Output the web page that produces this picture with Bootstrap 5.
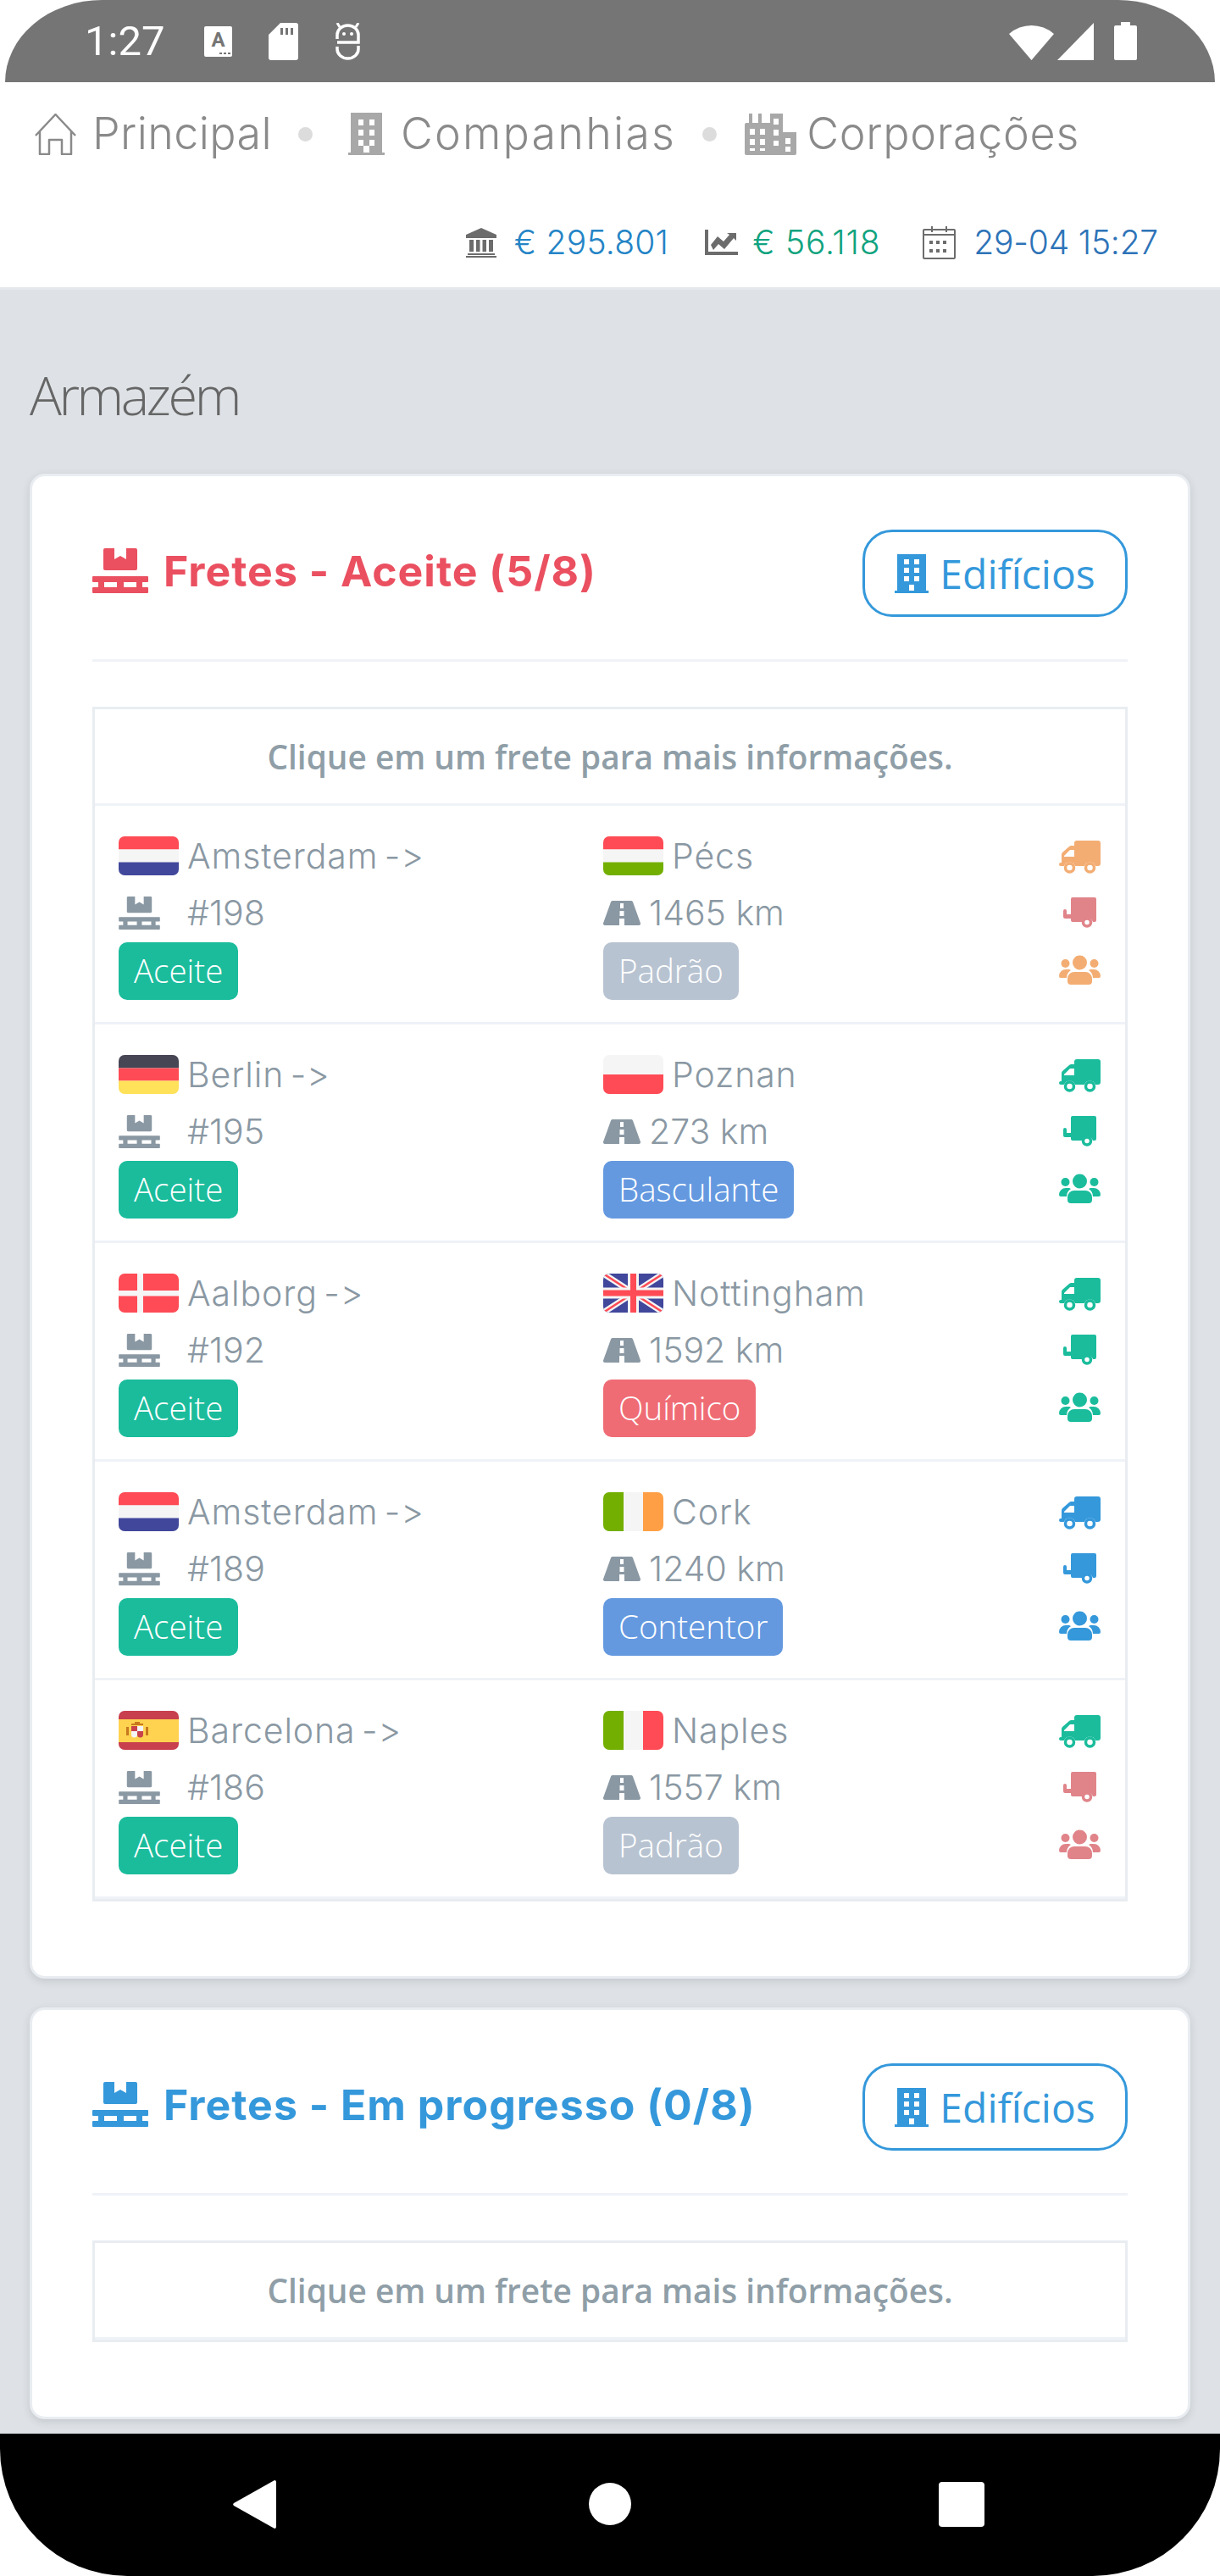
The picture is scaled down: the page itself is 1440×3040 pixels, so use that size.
<!DOCTYPE html>
<html lang="pt">
<head>
  <meta charset="UTF-8">
  <meta name="viewport" content="width=device-width, initial-scale=1.0">
  <title>Armazém</title>
  <link href="https://cdn.jsdelivr.net/npm/bootstrap@5.3.3/dist/css/bootstrap.min.css" rel="stylesheet">
  <style>
    body { background: #fff; height: 3040px; font-family: Inter, "Liberation Sans", sans-serif; font-variant-ligatures: none; font-feature-settings: "calt" 0; }
    svg { display: block; flex: none; }

    /* barras do android */
    .sys-top { height: 97px; margin: 0 6px; padding: 0 92px 0 94px; background: #757575; border-radius: 130px 130px 0 0 / 110px 110px 0 0; color: #fff; }
    .sys-time { font: 400 49px Roboto, sans-serif; width: 141px; }
    .sys-gap { margin-right: 43px; }
    .sys-bottom { height: 168px; padding: 0 278px 2px 275px; background: #000; border-radius: 0 0 150px 150px / 0 0 150px 150px; }
    .sys-circle { width: 50px; height: 50px; margin-left: 6px; }
    .sys-square { width: 54px; height: 53px; }

    /* topo */
    .top-bar { height: 247px; border-bottom: 3px solid #e5e8ec; background: #fff; }
    .top-links { padding-left: 41px; height: 122px; font-size: 52px; font-weight: 350; color: #8a8a8a; letter-spacing: .7px; }
    .top-ico-gap { margin-left: 19px; }
    .top-tight { letter-spacing: .4px; }
    .top-wide { letter-spacing: 2.2px; }
    .top-corp { margin-left: 12px; }
    .top-dot { width: 17px; height: 17px; margin: 0 42px 0 31px; border-radius: 50%; background: #dcdcdc; }
    .top-dot-end { margin-right: 33px; }
    .top-stats { margin-top: 32px; padding-right: 73px; font-size: 39px; font-weight: 350; letter-spacing: -.2px; height: 70px; }
    .stat-txt { margin-left: 21px; }
    .stat-ic { margin-left: 43px; }
    .stat-ic-end { margin-left: 50px; }
    .c-bank { color: #2484c6; letter-spacing: .25px; }
    .c-profit { color: #10a37f; letter-spacing: .8px; margin-left: 17px; }
    .c-date { color: #2d73b8; }

    /* conteudo */
    .page-main { background: #dee2e6; padding: 0 35px; overflow: hidden; }
    .page-title { font: 300 63px/76px "Open Sans", sans-serif; letter-spacing: -3.4px; color: #666; margin: 0; padding: 86px 0 0; height: 217px; }
    .frete-card { border: 3px solid #e9edf1; border-radius: 18px; box-shadow: 0 3px 10px rgba(60, 70, 80, .16); margin-bottom: 34px; }
    .frete-card .card-body { padding: 63px 71px 88px; }
    .frete-head { gap: 18px; margin: 0 0 6px; font-size: 50px; font-weight: 700; letter-spacing: 1px; }
    .frete-red { color: #ea5060; }
    .frete-blue { color: #3498db; }
    .btn-edif { gap: 13px; height: 103px; width: 313px; padding: 0; border: 3.5px solid #3498db; border-radius: 35px; color: #3498db; font: 400 48px "Open Sans", sans-serif; background: #fff; }
    .frete-sep { border: 0; border-top: 3px solid #eff2f7; opacity: 1; margin: 50px 0 53px; }
    .frete-list { border: 3px solid #e9edf1; border-radius: 0; }
    .frete-list .list-group-item { border: 0; border-bottom: 3px solid #eff2f7; border-radius: 0; padding: 0; }
    .frete-hint { height: 114px; display: flex; align-items: center; justify-content: center; font: 600 38.8px "Open Sans", sans-serif; color: #8f9ea7; }
    .frete-row { padding: 36px 29px 26px 28px !important; color: #8a98a3; font-size: 41px; font-weight: 350; }
    .col-from { width: 572px; }
    .row-line1 { gap: 10px; height: 46px; letter-spacing: .9px; word-spacing: -5px; }
    .row-line2 { height: 60px; margin-top: 14px; letter-spacing: 0; }
    .row-status { margin-top: 5px; }
    .road-gap { gap: 10px; }
    .col-icons { width: 49px; padding-top: 5px; }
    .ic-mid { margin-top: 28px; }
    .ic-last { margin-top: 32px; }
    .flag { width: 71px; height: 46px; border-radius: 7px; }
    .frete-tag { display: inline-block; height: 68px; padding: 0 18px; border-radius: 10px; color: #fff; font: 300 38.5px/66px "Open Sans", sans-serif; }
    .tag-ok { background: #1abc9c; }
    .tag-std { background: #b8c3d1; }
    .tag-blue { background: #6499e0; }
    .tag-red { background: #ef6c75; }
    .st-green { color: #1abc9c; }
    .st-orange { color: #f3ad73; }
    .st-red { color: #e0848a; }
    .st-blue { color: #3498db; }
  </style>
</head>
<body class="d-flex flex-column m-0">

<!-- icones -->
<svg width="0" height="0" class="position-absolute">
  <symbol id="i-pallet" viewBox="0 0 66 53"><path fill="currentColor" d="M13 2a2 2 0 0 1 2-2h11v13l7-4 7 4V0h11a2 2 0 0 1 2 2v22a2 2 0 0 1-2 2H15a2 2 0 0 1-2-2z"/><path fill="currentColor" d="M1 33h64a1 1 0 0 1 1 1v5a1 1 0 0 1-1 1h-6v6h6a1 1 0 0 1 1 1v5a1 1 0 0 1-1 1H1a1 1 0 0 1-1-1v-5a1 1 0 0 1 1-1h6v-6H1a1 1 0 0 1-1-1v-5a1 1 0 0 1 1-1zm13 7v6h15v-6zm23 0v6h15v-6z" fill-rule="evenodd"/></symbol>
  <symbol id="i-road" viewBox="0 0 44 29"><path fill="currentColor" d="M11 0h22a2 2 0 0 1 2 1.500l9 25a2 2 0 0 1-2 2.500H2a2 2 0 0 1-2-2.500l9-25A2 2 0 0 1 11 0z"/><path fill="#fff" d="M20 3h4v6h-4zM19.500 12h5v6h-5zM19 21h6v8h-6z"/></symbol>
  <symbol id="i-truck" viewBox="0 0 49 39"><path fill="currentColor" d="M18 3a3 3 0 0 1 3-3h25a3 3 0 0 1 3 3v24a3 3 0 0 1-3 3h-3a7 7 0 0 0-13 0H19a7 7 0 0 0-13 0H2a2 2 0 0 1 0-4h1V17a4 4 0 0 1 1-3l8-7a4 4 0 0 1 3-1h3z"/><path fill="#fff" d="M18 11v8H6v-1l7-7z"/><circle cx="12.500" cy="32" r="5" fill="none" stroke="currentColor" stroke-width="3.500"/><circle cx="36.500" cy="32" r="5" fill="none" stroke="currentColor" stroke-width="3.500"/></symbol>
  <symbol id="i-trailer" viewBox="0 0 39 36"><path fill="currentColor" d="M9 2a2 2 0 0 1 2-2h26a2 2 0 0 1 2 2v25a2 2 0 0 1-2 2h-2a7 7 0 0 0-13 0H11a2 2 0 0 1-2-2v-2H2a2 2 0 0 1-2-2v-7a2 2 0 0 1 4 0v4h5z"/><circle cx="28" cy="29.500" r="4.500" fill="none" stroke="currentColor" stroke-width="3.500"/></symbol>
  <symbol id="i-users" viewBox="0 0 49 35"><circle cx="24.500" cy="9" r="8.500" fill="currentColor"/><circle cx="7.500" cy="10" r="5" fill="currentColor"/><circle cx="41.500" cy="10" r="5" fill="currentColor"/><path fill="currentColor" d="M10 31v-3a8 8 0 0 1 8-8h13a8 8 0 0 1 8 8v3a4 4 0 0 1-4 4H14a4 4 0 0 1-4-4zM0 25a8 8 0 0 1 8-8h4l2 1a11 11 0 0 0-5 9H2a2 2 0 0 1-2-2zM49 25a8 8 0 0 0-8-8h-4l-2 1a11 11 0 0 1 5 9h7a2 2 0 0 0 2-2z"/></symbol>
  <symbol id="i-build" viewBox="0 0 40 46"><path fill="currentColor" fill-rule="evenodd" d="M3 0h34v43h3v3H0v-3h3zM11 6v6h6V6zm12 0v6h6V6zM11 16v6h6v-6zm12 0v6h6v-6zM11 26v6h6v-6zm12 0v6h6v-6zM17 36v7h6v-7z"/></symbol>

  <symbol id="f-nl" viewBox="0 0 71 46"><path fill="#ff4b55" d="M0 0h71v15.500H0z"/><path fill="#f5f5f5" d="M0 15.500h71v15H0z"/><path fill="#41479b" d="M0 30.500h71V46H0z"/></symbol>
  <symbol id="f-hu" viewBox="0 0 71 46"><path fill="#ff4b55" d="M0 0h71v15.500H0z"/><path fill="#f5f5f5" d="M0 15.500h71v15H0z"/><path fill="#73af00" d="M0 30.500h71V46H0z"/></symbol>
  <symbol id="f-de" viewBox="0 0 71 46"><path fill="#464655" d="M0 0h71v15.500H0z"/><path fill="#ff4b55" d="M0 15.500h71v15H0z"/><path fill="#ffe15a" d="M0 30.500h71V46H0z"/></symbol>
  <symbol id="f-pl" viewBox="0 0 71 46"><path fill="#f5f5f5" d="M0 0h71v23H0z"/><path fill="#ff4b55" d="M0 23h71v23H0z"/></symbol>
  <symbol id="f-dk" viewBox="0 0 71 46"><path fill="#ff4b55" d="M0 0h71v46H0z"/><path fill="#f5f5f5" d="M22 0h7v46h-7zM0 20h71v6.500H0z"/></symbol>
  <symbol id="f-uk" viewBox="0 0 71 46"><path fill="#41479b" d="M0 0h71v46H0z"/><path stroke="#f5f5f5" stroke-width="7" d="M0 0l71 46M71 0L0 46"/><path stroke="#ff4b55" stroke-width="2.500" d="M0 0l71 46M71 0L0 46"/><path fill="#f5f5f5" d="M29 0h13v46H29zM0 16.500h71v13H0z"/><path fill="#ff4b55" d="M32 0h7v46h-7zM0 19.500h71v7H0z"/></symbol>
  <symbol id="f-ie" viewBox="0 0 71 46"><path fill="#73af00" d="M0 0h24v46H0z"/><path fill="#f5f5f5" d="M24 0h23v46H24z"/><path fill="#ff9f45" d="M47 0h24v46H47z"/></symbol>
  <symbol id="f-it" viewBox="0 0 71 46"><path fill="#73af00" d="M0 0h24v46H0z"/><path fill="#f5f5f5" d="M24 0h23v46H24z"/><path fill="#ff4b55" d="M47 0h24v46H47z"/></symbol>
  <symbol id="f-es" viewBox="0 0 71 46"><path fill="#c83f4e" d="M0 0h71v46H0z"/><path fill="#ffd250" d="M0 10h71v27H0z"/><path fill="#c8414b" d="M15 18h7v6h-7z"/><path fill="#f5f5f5" d="M22 18h7v6h-7z"/><path fill="#f5f5f5" d="M15 24h7v4a3 3 0 0 1-7 0z"/><path fill="#c8414b" d="M22 24h7v4a3 3 0 0 1-7 0z"/><path fill="#c8781e" d="M15 15h14v2H15zM19 13h6v2h-6zM9 19h3v10H9zM32 19h3v10h-3z"/></symbol>
</svg>

<!-- status bar -->
<div class="bg-white">
  <div class="sys-top d-flex align-items-center">
    <div class="sys-time">1:27</div>
    <svg width="33" height="36" viewBox="0 0 33 36" class="sys-gap"><rect width="33" height="36" rx="2" fill="#fff"/><text x="16.500" y="24" text-anchor="middle" font-family="Roboto, sans-serif" font-size="24" font-weight="700" fill="#757575">A</text><path d="M18 31h3v2h-3zM23 31h3v2h-3zM28 31h3v2h-3" fill="#757575"/></svg>
    <svg width="35" height="44" viewBox="0 0 35 44" class="sys-gap"><path fill="#fff" fill-rule="evenodd" d="M14 0h18a3 3 0 0 1 3 3v38a3 3 0 0 1-3 3H3a3 3 0 0 1-3-3V14zM14 6v8h3V6zm6 0v8h3V6zm6 0v8h3V6z"/></svg>
    <svg width="31" height="44" viewBox="0 0 31 44" class="me-auto" fill="none" stroke="#fff" stroke-width="3.500"><path d="M3 19v-5a12.500 11 0 0 1 25 0v9H3M3 28v3a12.500 11 0 0 0 25 0v-4"/><path d="M3 0l3 5M28 0l-3 5" stroke-width="3"/><circle cx="11" cy="13" r="2" fill="#fff" stroke="none"/><circle cx="20" cy="13" r="2" fill="#fff" stroke="none"/></svg>
    <svg width="53" height="44" viewBox="0 0 53 44"><path fill="#fff" d="M0 13a40 40 0 0 1 53 0L26.500 44z"/></svg>
    <svg width="43" height="44" viewBox="0 0 43 44" class="ms-1"><path fill="#fff" d="M43 0v44H0z"/></svg>
    <svg width="27" height="45" viewBox="0 0 27 45" class="ms-4"><path fill="#fff" d="M8 0h11v4h6a2 2 0 0 1 2 2v37a2 2 0 0 1-2 2H2a2 2 0 0 1-2-2V6a2 2 0 0 1 2-2h6z"/></svg>
  </div>
</div>

<!-- navegacao -->
<nav class="top-bar">
  <div class="top-links d-flex align-items-center">
    <svg width="49" height="49" viewBox="0 0 49 49" fill="none" stroke="#8a8a8a" stroke-width="2.500" stroke-linejoin="round"><path d="M1 26L24.500 1 48 26M6 21v27h11V31h15v17h11V21"/></svg>
    <span class="top-ico-gap top-tight">Principal</span>
    <span class="top-dot"></span>
    <svg width="43" height="50" viewBox="0 0 43 50"><path fill="#a8a8a8" fill-rule="evenodd" d="M3 0h37v47h3v3H0v-3h3zM12 8v7h6V8zm13 0v7h6V8zM12 20v7h6v-7zm13 0v7h6v-7zM12 32v7h6v-7zm13 0v7h6v-7zM18 39v8h7v-8z"/></svg>
    <span class="top-ico-gap top-wide">Companhias</span>
    <span class="top-dot top-dot-end"></span>
    <svg width="61" height="49" viewBox="0 0 61 49"><path fill="#a8a8a8" fill-rule="evenodd" d="M5 0h4v11h7V0h4v11h10V0h15v22h16v25a2 2 0 0 1-2 2H2a2 2 0 0 1-2-2V13a2 2 0 0 1 2-2h3zM6 18v7h6v-7zm12 0v7h6v-7zM6 30v7h6v-7zm12 0v7h6v-7zM34 6v7h6V6zm0 13v7h6v-7zm0 13v6h6v-6zm14-3v7h6v-7zm0 10v6h6v-6zM6 41v3h6v-3zm12 0v3h6v-3z"/></svg>
    <span class="top-corp">Corporações</span>
  </div>
  <div class="top-stats d-flex align-items-center justify-content-end">
    <svg width="36" height="35" viewBox="0 0 36 35"><path fill="#6c6c6c" d="M18 0l18 8v4H0V8zM4 14h5v14H4zM12 14h4.500v14H12zM19.500 14H24v14h-4.500zM27 14h5v14h-5zM2 30h32v2H2zM0 33h36v2H0z"/></svg>
    <span class="c-bank stat-txt">€ 295.801</span>
    <svg width="39" height="30" viewBox="0 0 39 30" class="stat-ic"><path fill="#6c6c6c" d="M0 0h4v26h35v4H0zM7 18l8-10 7 6 7-8-3-2h11v9l-3-3-11 13-7-6-6 7z"/></svg>
    <span class="stat-txt c-profit">€ 56.118</span>
    <svg width="39" height="39" viewBox="0 0 39 39" class="stat-ic-end" fill="none" stroke="#6c6c6c" stroke-width="2"><rect x="1" y="4" width="37" height="34" rx="1"/><path d="M1 10h37M11 0v7M28 0v7"/><path stroke-width="4" stroke-dasharray="4 4" d="M8 19h24M8 29h24"/></svg>
    <span class="c-date stat-txt">29-04 15:27</span>
  </div>
</nav>

<main class="page-main flex-grow-1">
  <h1 class="page-title">Armazém</h1>

  <div class="card frete-card">
    <div class="card-body">
      <div class="d-flex justify-content-between align-items-center">
        <h4 class="frete-head frete-red d-flex align-items-center"><svg width="66" height="53"><use href="#i-pallet"/></svg>Fretes - Aceite (5/8)</h4>
        <button type="button" class="btn btn-edif d-flex align-items-center justify-content-center"><svg width="40" height="46"><use href="#i-build"/></svg>Edifícios</button>
      </div>
      <hr class="frete-sep">
      <ul class="list-group frete-list">
        <li class="list-group-item frete-hint">Clique em um frete para mais informações.</li>

        <li class="list-group-item frete-row d-flex">
          <div class="col-from">
            <div class="row-line1 d-flex align-items-center"><svg class="flag"><use href="#f-nl"/></svg><span>Amsterdam -&gt;</span></div>
            <div class="row-line2 d-flex align-items-center"><svg width="49" height="39"><use href="#i-pallet"/></svg><span class="ms-4 ps-2">#198</span></div>
            <div class="row-status"><span class="frete-tag tag-ok">Aceite</span></div>
          </div>
          <div class="flex-grow-1">
            <div class="row-line1 d-flex align-items-center"><svg class="flag"><use href="#f-hu"/></svg><span>Pécs</span></div>
            <div class="row-line2 road-gap d-flex align-items-center"><svg width="44" height="29"><use href="#i-road"/></svg><span>1465 km</span></div>
            <div class="row-status"><span class="frete-tag tag-std">Padrão</span></div>
          </div>
          <div class="col-icons d-flex flex-column align-items-center">
            <svg class="st-orange" width="49" height="39"><use href="#i-truck"/></svg>
            <svg class="st-red ic-mid" width="39" height="36"><use href="#i-trailer"/></svg>
            <svg class="st-orange ic-last" width="49" height="35"><use href="#i-users"/></svg>
          </div>
        </li>

        <li class="list-group-item frete-row d-flex">
          <div class="col-from">
            <div class="row-line1 d-flex align-items-center"><svg class="flag"><use href="#f-de"/></svg><span>Berlin -&gt;</span></div>
            <div class="row-line2 d-flex align-items-center"><svg width="49" height="39"><use href="#i-pallet"/></svg><span class="ms-4 ps-2">#195</span></div>
            <div class="row-status"><span class="frete-tag tag-ok">Aceite</span></div>
          </div>
          <div class="flex-grow-1">
            <div class="row-line1 d-flex align-items-center"><svg class="flag"><use href="#f-pl"/></svg><span>Poznan</span></div>
            <div class="row-line2 road-gap d-flex align-items-center"><svg width="44" height="29"><use href="#i-road"/></svg><span>273 km</span></div>
            <div class="row-status"><span class="frete-tag tag-blue">Basculante</span></div>
          </div>
          <div class="col-icons d-flex flex-column align-items-center">
            <svg class="st-green" width="49" height="39"><use href="#i-truck"/></svg>
            <svg class="st-green ic-mid" width="39" height="36"><use href="#i-trailer"/></svg>
            <svg class="st-green ic-last" width="49" height="35"><use href="#i-users"/></svg>
          </div>
        </li>

        <li class="list-group-item frete-row d-flex">
          <div class="col-from">
            <div class="row-line1 d-flex align-items-center"><svg class="flag"><use href="#f-dk"/></svg><span>Aalborg -&gt;</span></div>
            <div class="row-line2 d-flex align-items-center"><svg width="49" height="39"><use href="#i-pallet"/></svg><span class="ms-4 ps-2">#192</span></div>
            <div class="row-status"><span class="frete-tag tag-ok">Aceite</span></div>
          </div>
          <div class="flex-grow-1">
            <div class="row-line1 d-flex align-items-center"><svg class="flag"><use href="#f-uk"/></svg><span>Nottingham</span></div>
            <div class="row-line2 road-gap d-flex align-items-center"><svg width="44" height="29"><use href="#i-road"/></svg><span>1592 km</span></div>
            <div class="row-status"><span class="frete-tag tag-red">Químico</span></div>
          </div>
          <div class="col-icons d-flex flex-column align-items-center">
            <svg class="st-green" width="49" height="39"><use href="#i-truck"/></svg>
            <svg class="st-green ic-mid" width="39" height="36"><use href="#i-trailer"/></svg>
            <svg class="st-green ic-last" width="49" height="35"><use href="#i-users"/></svg>
          </div>
        </li>

        <li class="list-group-item frete-row d-flex">
          <div class="col-from">
            <div class="row-line1 d-flex align-items-center"><svg class="flag"><use href="#f-nl"/></svg><span>Amsterdam -&gt;</span></div>
            <div class="row-line2 d-flex align-items-center"><svg width="49" height="39"><use href="#i-pallet"/></svg><span class="ms-4 ps-2">#189</span></div>
            <div class="row-status"><span class="frete-tag tag-ok">Aceite</span></div>
          </div>
          <div class="flex-grow-1">
            <div class="row-line1 d-flex align-items-center"><svg class="flag"><use href="#f-ie"/></svg><span>Cork</span></div>
            <div class="row-line2 road-gap d-flex align-items-center"><svg width="44" height="29"><use href="#i-road"/></svg><span>1240 km</span></div>
            <div class="row-status"><span class="frete-tag tag-blue">Contentor</span></div>
          </div>
          <div class="col-icons d-flex flex-column align-items-center">
            <svg class="st-blue" width="49" height="39"><use href="#i-truck"/></svg>
            <svg class="st-blue ic-mid" width="39" height="36"><use href="#i-trailer"/></svg>
            <svg class="st-blue ic-last" width="49" height="35"><use href="#i-users"/></svg>
          </div>
        </li>

        <li class="list-group-item frete-row d-flex">
          <div class="col-from">
            <div class="row-line1 d-flex align-items-center"><svg class="flag"><use href="#f-es"/></svg><span>Barcelona -&gt;</span></div>
            <div class="row-line2 d-flex align-items-center"><svg width="49" height="39"><use href="#i-pallet"/></svg><span class="ms-4 ps-2">#186</span></div>
            <div class="row-status"><span class="frete-tag tag-ok">Aceite</span></div>
          </div>
          <div class="flex-grow-1">
            <div class="row-line1 d-flex align-items-center"><svg class="flag"><use href="#f-it"/></svg><span>Naples</span></div>
            <div class="row-line2 road-gap d-flex align-items-center"><svg width="44" height="29"><use href="#i-road"/></svg><span>1557 km</span></div>
            <div class="row-status"><span class="frete-tag tag-std">Padrão</span></div>
          </div>
          <div class="col-icons d-flex flex-column align-items-center">
            <svg class="st-green" width="49" height="39"><use href="#i-truck"/></svg>
            <svg class="st-red ic-mid" width="39" height="36"><use href="#i-trailer"/></svg>
            <svg class="st-red ic-last" width="49" height="35"><use href="#i-users"/></svg>
          </div>
        </li>
      </ul>
    </div>
  </div>

  <div class="card frete-card">
    <div class="card-body">
      <div class="d-flex justify-content-between align-items-center">
        <h4 class="frete-head frete-blue d-flex align-items-center"><svg width="66" height="53"><use href="#i-pallet"/></svg>Fretes - Em progresso (0/8)</h4>
        <button type="button" class="btn btn-edif d-flex align-items-center justify-content-center"><svg width="40" height="46"><use href="#i-build"/></svg>Edifícios</button>
      </div>
      <hr class="frete-sep">
      <ul class="list-group frete-list">
        <li class="list-group-item frete-hint">Clique em um frete para mais informações.</li>
      </ul>
    </div>
  </div>
</main>

<!-- botoes do android -->
<div class="bg-white">
  <div class="sys-bottom d-flex align-items-center justify-content-between">
    <svg width="51" height="57" viewBox="0 0 51 57"><path fill="#fff" d="M49 0a2 2 0 0 1 2 2v53a2 2 0 0 1-2 2L1 30a2 2 0 0 1 0-3z"/></svg>
    <span class="sys-circle bg-white rounded-circle d-block"></span>
    <span class="sys-square bg-white rounded-1 d-block"></span>
  </div>
</div>

<script src="https://cdn.jsdelivr.net/npm/bootstrap@5.3.3/dist/js/bootstrap.bundle.min.js"></script>
</body>
</html>
